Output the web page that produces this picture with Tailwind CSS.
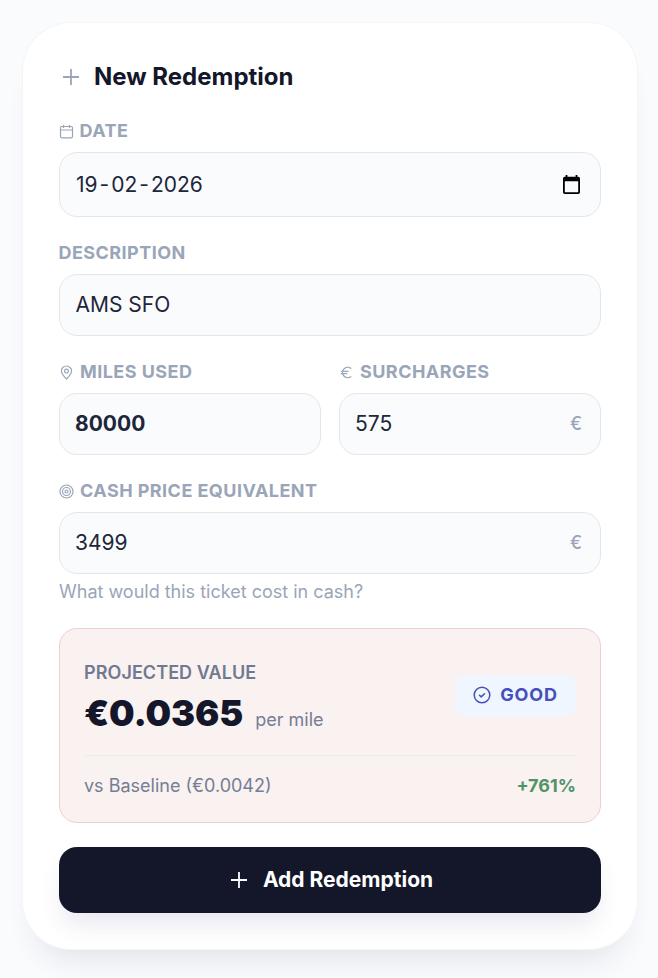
<!DOCTYPE html>
<html lang="en">
<head>
    <meta charset="UTF-8">
    <meta name="viewport" content="width=device-width, initial-scale=1.0">
    <title>New Redemption</title>
    <script src="https://cdn.jsdelivr.net/npm/@tailwindcss/browser@4"></script>
</head>
<body class="bg-[#fafbfd] font-[Inter,sans-serif] h-[978px] overflow-hidden px-[23px] pt-[23px] pr-[21px] text-[#20263a]">

    <div class="h-[926px] bg-white rounded-[48px] px-9 pt-9 shadow-[0_0_0_1px_#f4f5f7,0_24px_30px_-14px_rgba(30,35,70,0.11)]">
        <div class="h-9 flex items-center gap-[11px] mb-6">
            <svg class="size-6 text-[#9aa5b8]" viewBox="0 0 24 24" fill="none" stroke="currentColor" stroke-width="1.8"><path d="M4 12h16M12 4v16"/></svg>
            <h1 class="text-2xl font-bold text-[#14172a]">New Redemption</h1>
        </div>

        <form class="flex flex-col gap-6">
            <div>
                <label class="h-6 mb-[9px] flex items-center gap-[5.5px] text-lg font-bold tracking-[0.45px] text-[#9aa5b8]">
                    <svg class="w-[15px] h-[15px]" viewBox="0 0 15 15" fill="none" stroke="currentColor" stroke-width="1.2"><rect x="1.5" y="2.5" width="12" height="11.3" rx="1.2"/><path d="M1.5 6h12M4.5 1v3M10.5 1v3"/></svg>
                    DATE
                </label>
                <div class="h-[65px] flex items-center justify-between rounded-[18px] border border-[#e3e7ec] bg-[#fafbfd] pl-4 pr-5 text-[21px]">
                    <span class="flex gap-[2px]"><span>19</span><span>-</span><span>02</span><span>-</span><span>2026</span></span>
                    <svg class="w-[17px] h-[19px] -mt-px text-black" viewBox="0 0 17 19" fill="currentColor"><path fill-rule="evenodd" d="M2.6 0h1.8v1.7h8.2V0h1.8v1.7h.8A1.8 1.8 0 0 1 17 3.5v13.7a1.8 1.8 0 0 1-1.8 1.8H1.8A1.8 1.8 0 0 1 0 17.2V3.5a1.8 1.8 0 0 1 1.8-1.8h.8zM1.8 6.2v11h13.4v-11z"/></svg>
                </div>
            </div>

            <div>
                <label class="h-6 mb-[9px] flex items-center -ml-[0.5px] text-lg font-bold tracking-[0.45px] text-[#9aa5b8]">DESCRIPTION</label>
                <input type="text" value="AMS SFO" class="block w-full h-[62px] rounded-[18px] border border-[#e3e7ec] bg-[#fafbfd] px-[15.5px] pb-px text-[21px]">
            </div>

            <div class="grid grid-cols-2 gap-[18px]">
                <div>
                    <label class="h-6 mb-[9px] flex items-center gap-1.5 text-lg font-bold tracking-[0.45px] text-[#9aa5b8]">
                        <svg class="w-[15px] h-[15px] mt-px" viewBox="0 0 15 15" fill="none" stroke="currentColor" stroke-width="1.2"><path d="M7.5 14C5 11.6 2.4 9 2.4 6.1a5.1 5.1 0 0 1 10.2 0C12.6 9 10 11.6 7.5 14z"/><circle cx="7.5" cy="6.1" r="1.9"/></svg>
                        MILES USED
                    </label>
                    <input type="text" value="80000" class="block w-full h-[62px] rounded-[18px] border border-[#e3e7ec] bg-[#fafbfd] px-[15px] pb-px text-[21px] font-bold">
                </div>
                <div>
                    <label class="h-6 mb-[9px] flex items-center gap-1.5 text-lg font-bold tracking-[0.45px] text-[#9aa5b8]">
                        <svg class="w-[15px] h-[15px] mt-px" viewBox="0 0 15 15" fill="none" stroke="currentColor" stroke-width="1.2" stroke-linecap="round"><path d="M11.8 3.3A5.2 5.2 0 1 0 11.8 11.700M2.200 6.300h7M2.200 8.700h5.600"/></svg>
                        SURCHARGES
                    </label>
                    <div class="h-[62px] flex items-center justify-between rounded-[18px] border border-[#e3e7ec] bg-[#fafbfd] pl-[15px] pr-[18px] text-[21px]">
                        <span>575</span>
                        <span class="text-lg font-medium text-[#9aa5b8]">€</span>
                    </div>
                </div>
            </div>

            <div>
                <label class="h-6 mb-[9px] flex items-center gap-1.5 text-lg font-bold tracking-[0.45px] text-[#9aa5b8]">
                    <svg class="w-[15px] h-[15px] mt-px" viewBox="0 0 15 15" fill="none" stroke="currentColor" stroke-width="1.2"><circle cx="7.5" cy="7.5" r="6.5"/><circle cx="7.5" cy="7.5" r="4"/><circle cx="7.5" cy="7.5" r="1.5"/></svg>
                    CASH PRICE EQUIVALENT
                </label>
                <div class="h-[62px] flex items-center justify-between rounded-[18px] border border-[#e3e7ec] bg-[#fafbfd] pl-[15px] pr-[18px] text-[21px]">
                    <span>3499</span>
                    <span class="text-lg font-medium text-[#9aa5b8]">€</span>
                </div>
                <p class="mt-1.5 h-6 text-lg leading-6 text-[#9aa5b8]">What would this ticket cost in cash?</p>
            </div>

            <div class="h-[195px] rounded-[18px] border border-[#f0cdd0] bg-[#faf1f1] px-6 pt-6">
                <div class="h-[103px] flex items-start justify-between border-b border-[#eeeaee]">
                    <div class="pt-2">
                        <p class="h-[25px] text-lg leading-6 font-semibold tracking-[0.07px] text-[#6f7a90]">PROJECTED VALUE</p>
                        <div class="flex items-baseline gap-3 leading-[54px]">
                            <span class="text-[36px] font-black tracking-[-0.1px] text-[#14172a]">€0.0365</span>
                            <span class="text-lg text-[#747e94]">per mile</span>
                        </div>
                    </div>
                    <div class="mt-[22px] h-[41px] flex items-center gap-[9px] rounded-[9px] bg-[#eff6ff] px-[18px] pb-px text-lg font-bold tracking-[0.9px] text-[#4650bb]">
                        <svg class="size-[18px]" viewBox="0 0 18 18" fill="none" stroke="currentColor" stroke-width="1.5" stroke-linecap="round" stroke-linejoin="round"><circle cx="9" cy="9" r="7.8"/><path d="M6.5 9.3l1.7 1.6 3.3-3.2"/></svg>
                        GOOD
                    </div>
                </div>
                <div class="mt-[18px] h-6 flex items-center justify-between text-lg text-[#747e94]">
                    <span>vs Baseline (€0.0042)</span>
                    <span class="font-bold text-[#4f9468]">+761%</span>
                </div>
            </div>

            <button type="button" class="h-[66px] flex items-center justify-center gap-3 rounded-[18px] bg-[#14172a] text-[21px] font-bold text-white shadow-[0_15px_24px_-5px_rgba(60,65,130,0.13)]">
                <svg class="size-6" viewBox="0 0 24 24" fill="none" stroke="currentColor" stroke-width="1.8"><path d="M4 12h16M12 4v16"/></svg>
                Add Redemption
            </button>
        </form>
    </div>

</body>
</html>
